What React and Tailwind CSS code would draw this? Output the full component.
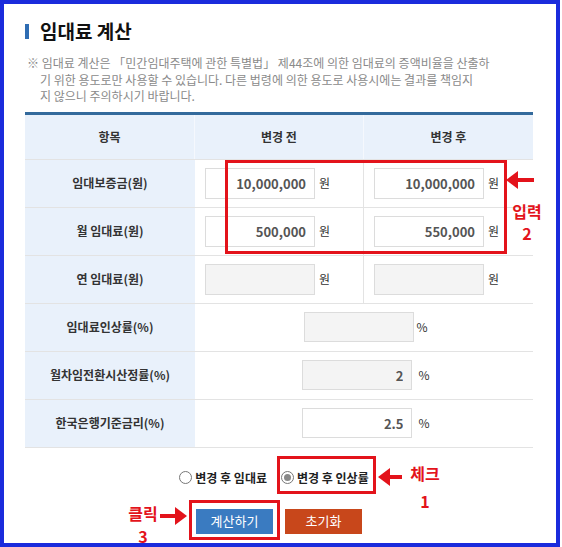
import React from 'react';

const RED = '#e3131b';

// 왼쪽을 가리키는 빨간 화살표 (flip이면 오른쪽)
const Arrow = ({ w = 30, flip = false, className = '' }) => (
  <svg width={w} height="20" viewBox={`0 0 ${w} 20`} className={className} style={flip ? { transform: 'scaleX(-1)' } : undefined}>
    <polygon points="0,10 12,1 12,19" fill={RED} />
    <rect x="10" y="8" width={w - 10} height="4" fill={RED} />
  </svg>
);

const Field = ({ value = '', gray = false, unit = '원', gap = 'ml-[4px]', h = 'h-[31px]' }) => (
  <div className="flex items-center">
    <input
      readOnly
      value={value}
      className={`w-[110px] ${h} border border-[#dcdcdc] ${gray ? 'bg-[#f4f4f4]' : 'bg-white'} text-right pr-[8px] text-[13px] font-bold text-[#555] outline-none`}
    />
    <span className={`${gap} text-[12px] text-[#333]`}>{unit}</span>
  </div>
);

const Radio = ({ checked, label }) => (
  <label className="flex items-center gap-[3px] text-[12px] font-bold text-[#222]">
    <span className="w-[13px] h-[13px] rounded-full border border-[#777] bg-white flex items-center justify-center">
      {checked && <span className="w-[7px] h-[7px] rounded-full bg-[#888]" />}
    </span>
    {label}
  </label>
);

const labelCell = 'border-t border-[#e3e3e3] h-[48px] bg-[#e9f1fb] flex items-center justify-center text-[12px] font-bold text-[#333]';
const halfCell = 'border-t border-[#e3e3e3] h-[48px] flex items-center pl-[10px]';
const wideCell = 'border-t border-[#e3e3e3] h-[48px] col-span-2 flex items-center justify-center pl-[4px]';
const headCell = 'h-[44px] bg-[#e9f1fb] flex items-center justify-center text-[12px] font-bold text-[#333]';

export default function App() {
  return (
    <div className="relative w-[560px] h-[547px] border-4 border-[#1a2bdc] bg-white font-['Noto_Sans_CJK_KR','Noto_Sans',sans-serif] text-[#222]">
      <div className="pl-[21px] pt-[14px]">
        {/* 제목 */}
        <h2 className="flex items-center gap-[11px] text-[19px] font-bold leading-[26px] text-[#111]">
          <span className="w-[4px] h-[15px] bg-[#2f6db3]" />
          임대료 계산
        </h2>

        {/* 안내 문구 */}
        <div className="mt-[11px] pl-[2px] text-[12px] leading-[16.5px] text-[#8a8a8a] whitespace-nowrap">
          <p>※ 임대료 계산은 「민간임대주택에 관한 특별법」 제44조에 의한 임대료의 증액비율을 산출하</p>
          <p className="pl-[13px]">기 위한 용도로만 사용할 수 있습니다. 다른 법령에 의한 용도로 사용시에는 결과를 책임지</p>
          <p className="pl-[13px]">지 않으니 주의하시기 바랍니다.</p>
        </div>

        {/* 계산 표 */}
        <div className="mt-[7px] w-[508px] border-t-[3px] border-[#336a9c] border-b border-b-[#e3e3e3] grid grid-cols-[170px_169px_169px]">
          <div className={`${headCell} border-r border-[#f5f8fd]`}>항목</div>
          <div className={`${headCell} border-r border-[#f5f8fd]`}>변경 전</div>
          <div className={headCell}>변경 후</div>

          <div className={labelCell}>임대보증금(원)</div>
          <div className={`${halfCell} border-r border-r-[#e3e3e3]`}><Field value="10,000,000" /></div>
          <div className={halfCell}><Field value="10,000,000" /></div>

          <div className={labelCell}>월 임대료(원)</div>
          <div className={`${halfCell} border-r border-r-[#e3e3e3]`}><Field value="500,000" /></div>
          <div className={halfCell}><Field value="550,000" /></div>

          <div className={labelCell}>연 임대료(원)</div>
          <div className={`${halfCell} border-r border-r-[#e3e3e3]`}><Field gray /></div>
          <div className={halfCell}><Field gray /></div>

          <div className={labelCell}>임대료인상률(%)</div>
          <div className={wideCell}><Field gray unit="%" gap="ml-[2px]" h="h-[30px]" /></div>

          <div className={labelCell}>월차임전환시산정률(%)</div>
          <div className={wideCell}><Field gray value="2" unit="%" gap="ml-[6px]" h="h-[30px]" /></div>

          <div className={labelCell}>한국은행기준금리(%)</div>
          <div className={wideCell}><Field value="2.5" unit="%" gap="ml-[6px]" h="h-[30px]" /></div>
        </div>
      </div>

      {/* 계산 방식 선택 */}
      <div className="mt-[20px] h-[20px] flex items-center justify-center gap-[14px] pr-[12px]">
        <Radio label="변경 후 임대료" />
        <Radio checked label="변경 후 인상률" />
      </div>

      {/* 버튼 */}
      <div className="mt-[21px] flex justify-center gap-[12px] pr-[2px]">
        <button className="w-[77px] h-[25px] bg-[#3a7bc1] text-white text-[13px]">계산하기</button>
        <button className="w-[77px] h-[25px] bg-[#c8471b] text-white text-[13px]">초기화</button>
      </div>

      {/* 안내 표시 */}
      <div className="absolute left-[221px] top-[156px] w-[282px] h-[94px] border-[3px] border-[#e3131b]" />
      <Arrow w={28} className="absolute left-[502px] top-[166px]" />
      <div className="absolute left-[505px] top-[196px] w-[36px] text-center text-[16px] font-bold leading-[22px] text-[#e3131b]">
        입력<br />2
      </div>

      <div className="absolute left-[273px] top-[452px] w-[99px] h-[38px] border-[3px] border-[#e3131b]" />
      <Arrow w={24} className="absolute left-[374px] top-[463px]" />
      <div className="absolute left-[403px] top-[455px] w-[36px] text-center text-[16px] font-bold leading-[28px] text-[#e3131b]">
        체크<br />1
      </div>

      <div className="absolute left-[185px] top-[496px] w-[91px] h-[40px] border-[3px] border-[#e3131b]" />
      <Arrow w={27} flip className="absolute left-[156px] top-[502px]" />
      <div className="absolute left-[121px] top-[500px] w-[36px] text-center text-[16px] font-bold leading-[18px] text-[#e3131b]">클릭</div>
      <div className="absolute left-[121px] top-[523px] w-[36px] text-center text-[16px] font-bold leading-[18px] text-[#e3131b]">3</div>
    </div>
  );
}
